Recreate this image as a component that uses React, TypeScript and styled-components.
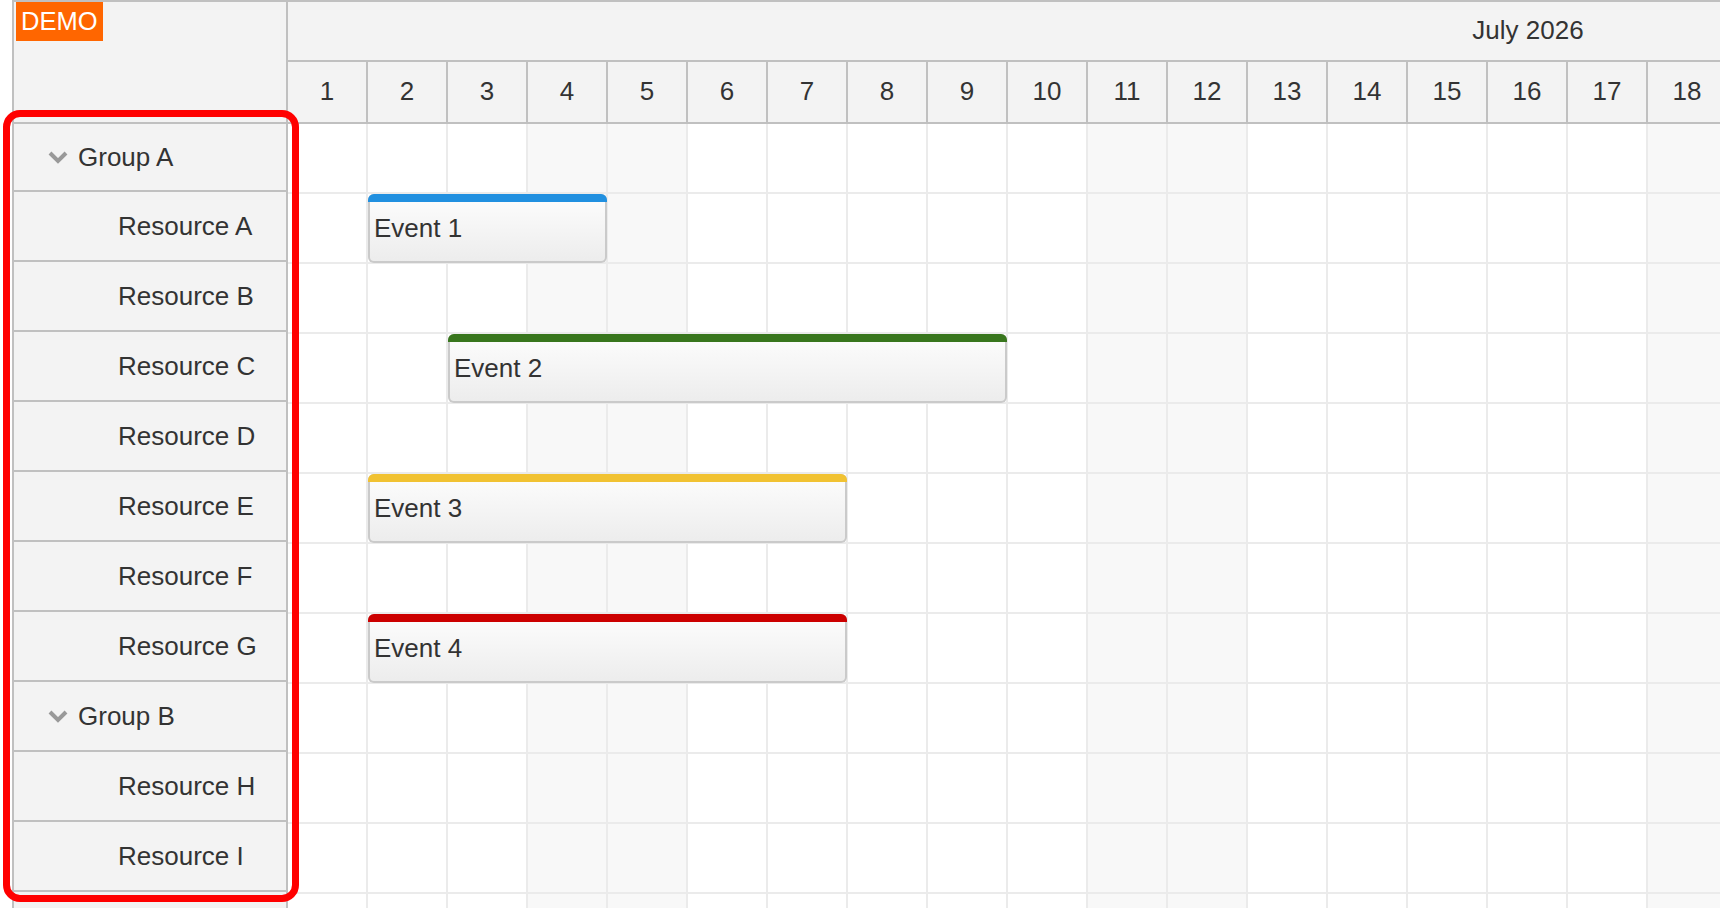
import React from 'react';
import styled, { createGlobalStyle } from 'styled-components';

const DAYS = 31;
const CELL = 80;
const ROW = 70;

const GlobalStyle = createGlobalStyle`
  html, body {
    margin: 0;
    padding: 0;
    overflow: hidden;
    background: #ffffff;
  }
  body {
    font-family: "Liberation Sans", Arial, sans-serif;
    color: #333333;
  }
`;

const Page = styled.div`
  position: relative;
  height: 100vh;
  padding-left: 12px;
  overflow: hidden;
`;

const Scheduler = styled.div`
  display: flex;
  border-top: 2px solid #c0c0c0;
  font-size: 26px;
`;

const RowHeaders = styled.div`
  flex: none;
  width: 276px;
  box-sizing: border-box;
  border-left: 2px solid #c0c0c0;
  border-right: 2px solid #c0c0c0;
  background: #f3f3f3;
`;

const Corner = styled.div`
  position: relative;
  height: 122px;
  box-sizing: border-box;
  border-bottom: 2px solid #c0c0c0;
`;

const DemoBadge = styled.div`
  position: absolute;
  left: 2px;
  top: 0;
  height: 39px;
  line-height: 39px;
  padding: 0 5px;
  font-size: 25.5px;
  background: #ff6600;
  color: #ffffff;
`;

const RowHeaderCell = styled.div<{ $group?: boolean; $first?: boolean }>`
  display: flex;
  align-items: center;
  height: ${(p) => (p.$first ? ROW - 2 : ROW)}px;
  box-sizing: border-box;
  border-bottom: 2px solid #c0c0c0;
  padding-left: ${(p) => (p.$group ? '34px' : '104px')};
  gap: 10px;
  white-space: nowrap;
`;

const Chevron = styled.svg`
  width: 20px;
  height: 13px;
  flex: none;
`;

const Timeline = styled.div`
  flex: none;
  width: ${DAYS * CELL}px;
`;

const MonthHeader = styled.div`
  height: 60px;
  box-sizing: border-box;
  padding-bottom: 2px;
  border-bottom: 2px solid #c0c0c0;
  background: #f3f3f3;
  display: flex;
  align-items: center;
  justify-content: center;
`;

const DayHeaderRow = styled.div`
  display: flex;
  height: 62px;
  box-sizing: border-box;
  border-bottom: 2px solid #c0c0c0;
  background: #f3f3f3;
`;

const DayHeader = styled.div`
  flex: none;
  width: ${CELL}px;
  box-sizing: border-box;
  padding-bottom: 2px;
  border-right: 2px solid #c0c0c0;
  display: flex;
  align-items: center;
  justify-content: center;
`;

const GridRow = styled.div`
  position: relative;
  display: flex;
  height: ${ROW}px;
`;

const GridCell = styled.div<{ $weekend?: boolean }>`
  flex: none;
  width: ${CELL}px;
  box-sizing: border-box;
  border-right: 2px solid #ebebeb;
  border-bottom: 2px solid #ebebeb;
  background: ${(p) => (p.$weekend ? '#f8f8f8' : '#ffffff')};
`;

const EventBox = styled.div`
  position: absolute;
  top: 0;
  height: 69px;
  display: flex;
  flex-direction: column;
  border-radius: 6px;
  overflow: hidden;
  background: linear-gradient(to bottom, #fdfdfd, #ececec);
  box-shadow: inset 0 0 0 2px #cacaca;
`;

const EventBar = styled.div<{ $color: string }>`
  flex: none;
  height: 8px;
  background: ${(p) => p.$color};
`;

const EventText = styled.div`
  margin-top: 11px;
  padding-left: 6px;
  line-height: 30px;
  white-space: nowrap;
`;

const Highlight = styled.div`
  position: absolute;
  left: 3px;
  top: 110px;
  width: 296px;
  height: 792px;
  box-sizing: border-box;
  border: 7px solid #ff0000;
  border-radius: 17px;
  pointer-events: none;
`;

type Row = { name: string; group?: boolean };

const rows: Row[] = [
  { name: 'Group A', group: true },
  { name: 'Resource A' },
  { name: 'Resource B' },
  { name: 'Resource C' },
  { name: 'Resource D' },
  { name: 'Resource E' },
  { name: 'Resource F' },
  { name: 'Resource G' },
  { name: 'Group B', group: true },
  { name: 'Resource H' },
  { name: 'Resource I' },
  { name: '' },
];

const events = [
  { row: 1, start: 2, days: 3, text: 'Event 1', color: '#2190e0' },
  { row: 3, start: 3, days: 7, text: 'Event 2', color: '#38761d' },
  { row: 5, start: 2, days: 6, text: 'Event 3', color: '#f1c232' },
  { row: 7, start: 2, days: 6, text: 'Event 4', color: '#cc0000' },
];

// July 1, 2026 is a Wednesday (0 = Sunday)
const isWeekend = (day: number) => {
  const dow = (day + 2) % 7;
  return dow === 6 || dow === 0;
};

const days = Array.from({ length: DAYS }, (_, i) => i + 1);

const App: React.FC = () => {
  return (
    <Page>
      <GlobalStyle />
      <Scheduler>
        <RowHeaders>
          <Corner>
            <DemoBadge>DEMO</DemoBadge>
          </Corner>
          {rows.map((r, i) => (
            <RowHeaderCell key={i} $group={r.group} $first={i === 0}>
              {r.group && (
                <Chevron viewBox="0 0 20 13">
                  <polyline points="2,2 10,10 18,2" fill="none" stroke="#999999" strokeWidth="4" />
                </Chevron>
              )}
              <span>{r.name}</span>
            </RowHeaderCell>
          ))}
        </RowHeaders>
        <Timeline>
          <MonthHeader>July 2026</MonthHeader>
          <DayHeaderRow>
            {days.map((d) => (
              <DayHeader key={d}>{d}</DayHeader>
            ))}
          </DayHeaderRow>
          {rows.map((_, i) => (
            <GridRow key={i}>
              {days.map((d) => (
                <GridCell key={d} $weekend={isWeekend(d)} />
              ))}
              {events
                .filter((e) => e.row === i)
                .map((e) => (
                  <EventBox
                    key={e.text}
                    style={{ left: (e.start - 1) * CELL, width: e.days * CELL - 1 }}
                  >
                    <EventBar $color={e.color} />
                    <EventText>{e.text}</EventText>
                  </EventBox>
                ))}
            </GridRow>
          ))}
        </Timeline>
      </Scheduler>
      <Highlight />
    </Page>
  );
};

export default App;
